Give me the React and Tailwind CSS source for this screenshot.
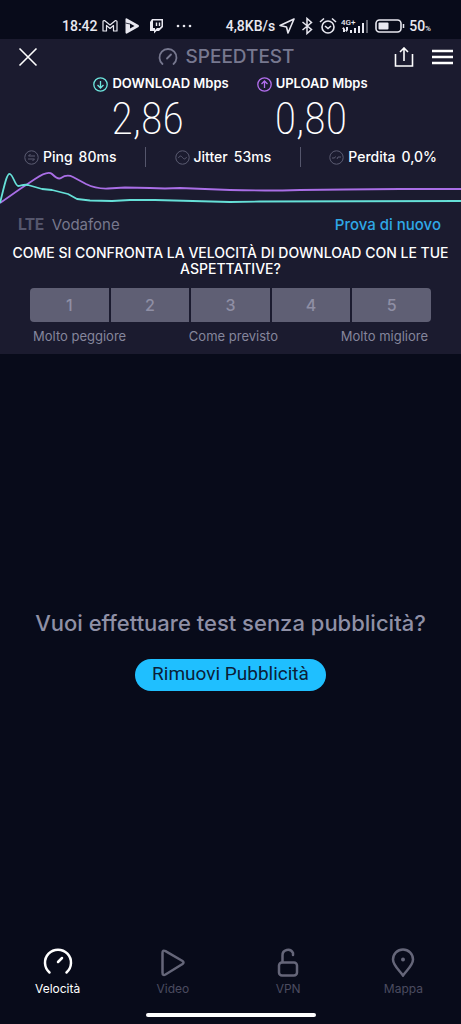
import React from "react";

const RATINGS = [1, 2, 3, 4, 5];

export default function App() {
  return (
    <div className="flex min-h-screen flex-col bg-[#080b1a] font-['Inter',sans-serif] text-white">
      <StatusBar />
      <section className="bg-[#1b1b2f]">
        <Header />

        {/* Download / upload */}
        <div className="flex justify-center gap-7">
          <Result label="DOWNLOAD Mbps" value="2,86" color="text-[#6ee7df]" icon={<path d="M7.5 4v7M4.5 8l3 3 3-3" />} />
          <Result label="UPLOAD Mbps" value="0,80" color="text-[#b36fee]" icon={<path d="M7.5 11V4M4.5 7l3-3 3 3" />} />
        </div>

        {/* Ping, jitter, loss */}
        <div className="flex h-6 items-center justify-between px-6">
          <Metric label="Ping" value="80ms" icon={<path d="M11 6H4.500l2-2M4 9h6.500l-2 2" />} />
          <span className="h-5 w-px bg-[#55566c]" />
          <Metric label="Jitter" value="53ms" icon={<path d="M3.500 8c1-2.500 2.500-2.500 4-.5s3 2 4-.5" />} />
          <span className="h-5 w-px bg-[#55566c]" />
          <Metric label="Perdita" value="0,0%" icon={<path d="M3 8h2.500l1-1.500M8 9l1-2h3" />} />
        </div>

        <SpeedChart />

        {/* Provider */}
        <div className="flex h-8 items-center justify-between pr-5 pl-[18px]">
          <div className="flex items-center gap-2 text-[#77788d]">
            <span className="font-['Roboto',sans-serif] text-base font-bold text-[#55566c]">LTE</span>
            <span className="text-[15px]">Vodafone</span>
          </div>
          <a href="#" className="text-[15px] font-medium text-[#2fa8e6]">Prova di nuovo</a>
        </div>

        {/* Survey */}
        <h2 className="px-3 pt-1 text-center text-sm leading-4 font-medium">
          COME SI CONFRONTA LA VELOCITÀ DI DOWNLOAD CON LE TUE ASPETTATIVE?
        </h2>
        <div className="mx-[30px] mt-[11px] grid grid-cols-5 gap-0.5 overflow-hidden rounded-sm">
          {RATINGS.map((n) => (
            <button key={n} type="button" className="h-[34px] bg-[#5f5f74] text-base font-medium text-[#8f8fa5]">
              {n}
            </button>
          ))}
        </div>
        <div className="mx-[33px] flex h-8 items-center justify-between pb-0.5 text-[13px] text-[#85869c]">
          <span>Molto peggiore</span>
          <span>Come previsto</span>
          <span>Molto migliore</span>
        </div>
      </section>

      {/* Remove ads */}
      <main className="flex flex-1 flex-col items-center justify-center gap-5 pb-1">
        <p className="text-[22px] leading-8 font-medium text-[#8f90a6]">Vuoi effettuare test senza pubblicità?</p>
        <button type="button" className="h-8 rounded-full bg-[#1fbfff] px-[17px] font-['Roboto',sans-serif] text-[19px] text-[#0b2038]">
          Rimuovi Pubblicità
        </button>
      </main>

      <BottomNav />
    </div>
  );
}

function StatusBar() {
  return (
    <div className="flex h-[39px] items-center justify-between pt-3 pr-[30px] pl-[62px] font-['Roboto',sans-serif] text-sm font-medium text-[#e8e8f0]">
      <div className="flex items-center gap-1">
        <span>18:42</span>
        <svg className="h-4 w-4" viewBox="0 0 16 16" fill="none" stroke="currentColor" strokeWidth="1.200" strokeLinejoin="round">
          <path d="M1 3.500Q1 2.500 2.500 2.500L8 7l5.500-4.500Q15 2.500 15 3.500V13h-3.500V7.500L8 10.500 4.500 7.500V13H1z" />
        </svg>
        <svg className="ml-0.5 h-4 w-4" viewBox="0 0 16 16" fill="currentColor">
          <path fillRule="evenodd" d="M1.500.8Q2 0 3 .5L14.500 7q1.200 1 0 2L3 15.500q-1.500.5-1.500-1zM6 5.500v5L10.500 8z" />
          <path d="M1.500 5l4.500 1" stroke="#080b1a" strokeWidth=".8" />
        </svg>
        <svg className="ml-1 h-4 w-4" viewBox="0 0 16 16">
          <path fill="currentColor" fillRule="evenodd" d="M4 1h11v8l-4 4H8.500L6 15.500V13H2V4zm1 1.500V10h2v2l2-2h2.500l2-2V2.500z" />
          <path d="M8.500 4.500V8M11.500 4.500V8" stroke="currentColor" strokeWidth="1.400" />
        </svg>
        <svg className="ml-2 h-4 w-4" viewBox="0 0 16 16" fill="currentColor">
          <circle cx="2" cy="8" r="1.300" />
          <circle cx="8" cy="8" r="1.300" />
          <circle cx="14" cy="8" r="1.300" />
        </svg>
      </div>
      <div className="flex items-center gap-1">
        <span>4,8KB/s</span>
        <svg className="h-4 w-4" viewBox="0 0 16 16" fill="none" stroke="currentColor" strokeWidth="1.600" strokeLinejoin="round">
          <path d="M15 1L1 7.500l6.500 1.500L9 15z" />
        </svg>
        <svg className="h-[18px] w-4" viewBox="0 0 16 18" fill="none" stroke="currentColor" strokeWidth="1.500">
          <path d="M3.500 5l9 7.500-4.500 4V1.500l4.500 4L3.500 13" />
        </svg>
        <svg className="h-[18px] w-[18px]" viewBox="0 0 18 18" fill="none" stroke="currentColor" strokeWidth="1.600">
          <circle cx="9" cy="10" r="6" />
          <path d="M6 9l3 2.500L12 9M1 5l4-3.500M17 5l-4-3.500" />
        </svg>
        <svg className="h-4 w-7" viewBox="0 0 28 16" fill="currentColor">
          <text x="0" y="7" fontSize="8">4G+</text>
          <path d="M1 11l1.500-2L4 11v3H2v-3zM5 9v3H4l1.500 2L7 12V9zM9 12h2v3H9zM13 10h2v5h-2zM17 8h2v7h-2zM21 5h2v10h-2z" />
          <path d="M25 2h2v13h-2z" opacity=".4" />
        </svg>
        <svg className="ml-0.5 h-3.5 w-[30px]" viewBox="0 0 30 14">
          <rect x="1" y="1" width="25" height="12" rx="3.500" fill="none" stroke="currentColor" strokeWidth="1.600" />
          <rect x="3.500" y="3.500" width="10" height="7" rx="1" fill="currentColor" />
          <path d="M28.500 5v4" stroke="currentColor" strokeWidth="1.500" />
        </svg>
        <span>
          50<span className="text-[8px]">%</span>
        </span>
      </div>
    </div>
  );
}

function Header() {
  return (
    <header className="grid h-9 grid-cols-[1fr_auto_1fr] items-center pr-2">
      <button type="button" aria-label="Chiudi" className="ml-[18px] justify-self-start">
        <svg className="h-5 w-5" viewBox="0 0 20 20" fill="none" stroke="currentColor" strokeWidth="1.600">
          <path d="M1.500 1.500l17 17M18.500 1.500l-17 17" />
        </svg>
      </button>
      <h1 className="flex items-center gap-[7px] text-[19px] font-medium text-[#77788f]">
        <svg className="h-5 w-5" viewBox="0 0 20 20" fill="none" stroke="currentColor" strokeWidth="1.800" strokeLinecap="round">
          <path d="M4.500 17a8.500 8.500 0 1 1 11 0M9 11.500l4-4" />
        </svg>
        SPEEDTEST
      </h1>
      <div className="flex items-center gap-[18px] justify-self-end">
        <button type="button" aria-label="Condividi">
          <svg className="h-5 w-5" viewBox="0 0 20 20" fill="none" stroke="currentColor" strokeWidth="1.600">
            <path d="M1.500 7v12h17V7M10 14V1.500M6 5l4-4 4 4" />
          </svg>
        </button>
        <button type="button" aria-label="Menu">
          <svg className="h-5 w-[21px]" viewBox="0 0 21 20" stroke="currentColor" strokeWidth="2.400">
            <path d="M0 4h21M0 10h21M0 16h21" />
          </svg>
        </button>
      </div>
    </header>
  );
}

function Result({ label, value, color, icon }) {
  return (
    <div>
      <div className="flex h-[18px] items-center gap-1">
        <svg className={`h-[15px] w-[15px] ${color}`} viewBox="0 0 15 15" fill="none" stroke="currentColor" strokeWidth="1.300">
          <circle cx="7.500" cy="7.500" r="6.700" />
          {icon}
        </svg>
        <span className="text-[13px] font-semibold">{label}</span>
      </div>
      <div className="pl-[18px] font-['Roboto_Condensed','Roboto',sans-serif] text-[44px] leading-[52px] font-extralight">
        {value}
      </div>
    </div>
  );
}

function Metric({ label, value, icon }) {
  return (
    <div className="flex items-center gap-1">
      <svg className="h-[15px] w-[15px] text-[#5c5d73]" viewBox="0 0 15 15" fill="none" stroke="currentColor">
        <circle cx="7.500" cy="7.500" r="6.700" />
        {icon}
      </svg>
      <span className="flex gap-1.5 text-sm font-medium">
        <span>{label}</span>
        <span>{value}</span>
      </span>
    </div>
  );
}

function SpeedChart() {
  return (
    <svg className="block h-10 w-full" viewBox="0 0 461 40" preserveAspectRatio="none" fill="none" strokeWidth="1.800" strokeLinejoin="round">
      <path
        stroke="#a96ee6"
        d="M0 34L20 20 35 10Q48 1 52 5Q58 11 61 9Q67 5 73 8L86 15Q96 20 108 19.500L125 18.500 150 19 165 19.500 180 19 230 21Q265 22 300 21L345 20.500 400 20 461 20"
      />
      <path
        stroke="#66e0d8"
        d="M0 34C5 14 7 4 10 5S15 16 18 17C21 17 23 15 28 16L42 20 52 21 68 25 77 30 90 31.500 112 32 130 31 155 31 230 33 260 32.500 461 32"
      />
    </svg>
  );
}

function BottomNav() {
  return (
    <footer className="pb-[7px]">
      <nav className="grid grid-cols-4">
        <NavItem label="Velocità" active>
          <path d="M6.500 25.500a13 13 0 1 1 17 0M15 15l4-4" />
        </NavItem>
        <NavItem label="Video">
          <path d="M4.500 6Q4.500 2.500 7.500 4.200L24.500 14q2 1.500 0 3L7.500 27.500Q4.500 29 4.500 25.500z" />
        </NavItem>
        <NavItem label="VPN">
          <rect x="6" y="15.500" width="18" height="13" rx="3" />
          <path d="M9.500 15V8.500a5.500 5.500 0 0 1 10.500-2.500V8" />
        </NavItem>
        <NavItem label="Mappa">
          <path d="M15 28.500C12 24 5 18.500 5 12.500a10 10 0 0 1 20 0C25 18.500 18 24 15 28.500z" />
          <circle cx="15" cy="12.500" r="2" fill="currentColor" stroke="none" />
        </NavItem>
      </nav>
      <div className="mx-auto mt-4 h-1 w-[170px] rounded-full bg-white" />
    </footer>
  );
}

function NavItem({ label, active, children }) {
  return (
    <a href="#" className={`flex flex-col items-center gap-1 text-xs leading-4 ${active ? "text-white" : "text-[#4b4c60]"}`}>
      <svg
        className={`h-[30px] w-[30px] ${active ? "text-white" : "text-[#656679]"}`}
        viewBox="0 0 30 30"
        fill="none"
        stroke="currentColor"
        strokeWidth="2.500"
        strokeLinecap="round"
      >
        {children}
      </svg>
      {label}
    </a>
  );
}
